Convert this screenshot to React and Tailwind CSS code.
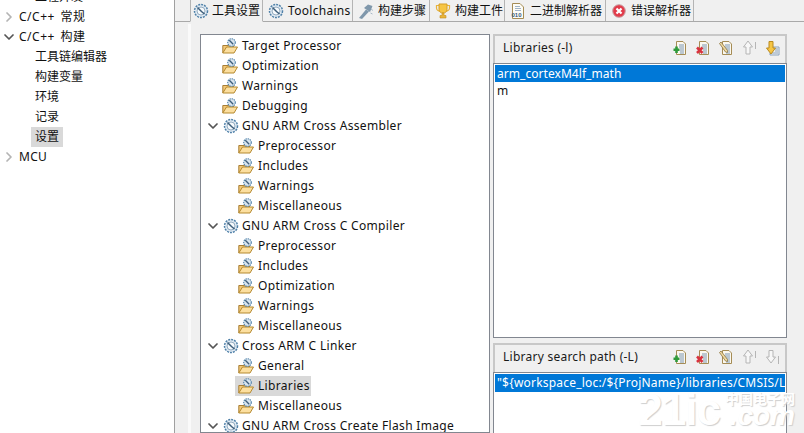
import { ChevronDown, ChevronRight } from "lucide-react";

const font = "font-['Noto_Sans','Noto_Sans_CJK_SC',sans-serif]";

// blue tool gear used by tabs and tree groups
const ToolIcon = () => (
  <svg width="16" height="16" viewBox="0 0 16 16" className="shrink-0">
    <circle cx="8" cy="8" r="6.5" fill="#dfe9f2" stroke="#4f80a8" strokeWidth="1.5" strokeDasharray="2 1" />
    <circle cx="8" cy="8" r="4" fill="#f7fafc" stroke="#7d9ab3" strokeWidth="0.8" />
    <path d="M4.5 4.5L8.5 8.5L11.5 11" stroke="#3c5d7a" strokeWidth="1.5" fill="none" />
  </svg>
);

const FolderIcon = () => (
  <svg width="16" height="16" viewBox="0 0 16 16" className="shrink-0">
    <path d="M0.8 15V7.5H5L11.5 8V10" fill="#f3c878" stroke="#a87f35" />
    <path d="M0.8 15L4.5 9H15.5L12 15Z" fill="#fcdf9f" stroke="#b5892f" />
    <circle cx="9.5" cy="4.5" r="3.8" fill="#d9e5ef" stroke="#4f80a8" strokeWidth="1.1" strokeDasharray="1.4 0.8" />
    <path d="M7.3 2.3L11.2 6.2" stroke="#3c5d7a" strokeWidth="1.3" />
  </svg>
);

const Doc = () => (
  <>
    <path d="M4.5 1.5H11L13.5 4V14.5H4.5Z" fill="#fbf8ef" stroke="#a58c55" />
    <path d="M7 5H12M7 7H12M8 9H12M8 11H12M8 13H12" stroke="#7d97b3" strokeWidth="1" />
  </>
);

const AddIcon = () => (
  <svg width="16" height="16" viewBox="0 0 16 16">
    <Doc />
    <path d="M4.5 6.5V13M1.5 9.8H7.5" stroke="#2f9a3a" strokeWidth="2.6" />
  </svg>
);

const RemoveIcon = () => (
  <svg width="16" height="16" viewBox="0 0 16 16">
    <Doc />
    <path d="M2 7.5L7.5 13M7.5 7.5L2 13" stroke="#d9333f" strokeWidth="2.6" />
  </svg>
);

const EditIcon = () => (
  <svg width="16" height="16" viewBox="0 0 16 16">
    <Doc />
    <path d="M1.5 3.5L3 2L9.5 10.5L9.5 12.5L7.5 12Z" fill="#f0d9a0" stroke="#8a7440" strokeWidth="0.8" />
  </svg>
);

const UpIcon = () => (
  <svg width="16" height="16" viewBox="0 0 16 16">
    <path d="M7 1L11.5 7H9V14H5V7H2.5Z" fill="#f7f7f7" stroke="#b5b5b5" />
    <path d="M14.5 2V9" stroke="#b5b5b5" />
  </svg>
);

const DownIcon = ({ active }) => (
  <svg width="16" height="16" viewBox="0 0 16 16">
    {active && <path d="M9 7H15V15H6V13M11 9H14M11 11H14M8 13H14" fill="none" stroke="#8aa3bd" />}
    <path
      d="M7 14L2.5 8H5V1.5H9V8H11.5Z"
      fill={active ? "#f6c544" : "#f7f7f7"}
      stroke={active ? "#b98a1f" : "#b5b5b5"}
    />
    {!active && <path d="M14.5 7V15" stroke="#b5b5b5" />}
  </svg>
);

const StepIcon = () => (
  <svg width="16" height="16" viewBox="0 0 16 16" className="shrink-0">
    <path d="M1 15L8 6.5L11 8.5L4 16Z" fill="#7f97ab" />
    <path d="M6 5L10 1.5L14.5 3L12 9Z" fill="#7f97ab" />
    <path d="M13 6L15 7.5M12.5 10L14.5 11" stroke="#a9bac8" />
  </svg>
);

const TrophyIcon = () => (
  <svg width="16" height="16" viewBox="0 0 16 16" className="shrink-0">
    <path d="M1.5 2.5H14.5V5C14.5 7 12.5 8 11 8H5C3.5 8 1.5 7 1.5 5Z" fill="none" stroke="#e7b33c" strokeWidth="1.2" />
    <path d="M4 1H12V6.5C12 9 10 10 8 10C6 10 4 9 4 6.5Z" fill="#f6c544" stroke="#d69e26" />
    <path d="M7 10H9V12.5H11V15H5V12.5H7Z" fill="#eab63a" stroke="#c48f20" strokeWidth="0.6" />
  </svg>
);

const BinaryIcon = () => (
  <svg width="16" height="16" viewBox="0 0 16 16" className="shrink-0">
    <path d="M2.5 0.5H10L13.5 4V15.5H2.5Z" fill="#fdfcf5" stroke="#a58c55" />
    <path d="M5 3.5H10M5 5.5H11M5 7.5H11" stroke="#9fb3c8" />
    <text x="1.5" y="14" fontSize="6" fontWeight="700" fill="#37597c" fontFamily="Liberation Sans">010</text>
  </svg>
);

const ErrorIcon = () => (
  <svg width="16" height="16" viewBox="0 0 16 16" className="shrink-0">
    <circle cx="8" cy="8" r="6.3" fill="#e23b4a" stroke="#c7a0a4" />
    <path d="M5.5 5.5L10.5 10.5M10.5 5.5L5.5 10.5" stroke="#fff" strokeWidth="2.2" />
  </svg>
);

const navRows = [
  { label: "工程开发", indent: 1 },
  { label: "C/C++ 常规", arrow: "right", wide: true },
  { label: "C/C++ 构建", arrow: "down", wide: true },
  { label: "工具链编辑器", indent: 1 },
  { label: "构建变量", indent: 1 },
  { label: "环境", indent: 1 },
  { label: "记录", indent: 1 },
  { label: "设置", indent: 1, selected: true },
  { label: "MCU", arrow: "right" },
];

const tabs = [
  { label: "工具设置", icon: <ToolIcon />, width: "w-[73px]", active: true },
  { label: "Toolchains", icon: <ToolIcon />, width: "w-[90px]", latin: true },
  { label: "构建步骤", icon: <StepIcon />, width: "w-[77px]" },
  { label: "构建工件", icon: <TrophyIcon />, width: "w-[75px]" },
  { label: "二进制解析器", icon: <BinaryIcon />, width: "w-[101px]" },
  { label: "错误解析器", icon: <ErrorIcon />, width: "w-[88px]" },
];

const treeRows = [
  ["Target Processor", 1],
  ["Optimization", 1],
  ["Warnings", 1],
  ["Debugging", 1],
  ["GNU ARM Cross Assembler", 0],
  ["Preprocessor", 2],
  ["Includes", 2],
  ["Warnings", 2],
  ["Miscellaneous", 2],
  ["GNU ARM Cross C Compiler", 0],
  ["Preprocessor", 2],
  ["Includes", 2],
  ["Optimization", 2],
  ["Warnings", 2],
  ["Miscellaneous", 2],
  ["Cross ARM C Linker", 0],
  ["General", 2],
  ["Libraries", 2, true],
  ["Miscellaneous", 2],
  ["GNU ARM Cross Create Flash Image", 0],
];

const Toolbar = ({ downActive }) => (
  <div className="flex items-center gap-[7px]">
    <AddIcon />
    <RemoveIcon />
    <EditIcon />
    <UpIcon />
    <DownIcon active={downActive} />
  </div>
);

const ListPanel = ({ title, downActive, className, children }) => (
  <section className={`flex flex-col ${className}`}>
    <header className="h-[29px] shrink-0 flex items-center justify-between pl-[8px] pr-[5px] pb-[4px] border-2 border-[#c8c8c8] border-b-0 text-[#1a1a1a]">
      <span className="tracking-[0.25px]">{title}</span>
      <Toolbar downActive={downActive} />
    </header>
    <div className="flex-1 bg-white border border-[#828790] p-[1px] overflow-hidden">{children}</div>
  </section>
);

export default function App() {
  return (
    <div className={`${font} flex w-[804px] h-[433px] overflow-hidden bg-[#f0f0f0] text-[12px] text-[#111]`}>
      {/* left nav */}
      <aside className="w-[175px] shrink-0 bg-white border-r border-[#a0a0a0] -mt-[13px]">
        {navRows.map((row) => (
          <div key={row.label} className="h-[20px] flex items-center">
            {row.arrow === "right" && <ChevronRight size={16} strokeWidth={2.6} className="ml-[1px] mr-[2px] text-[#b4b4b4]" />}
            {row.arrow === "down" && <ChevronDown size={16} strokeWidth={2.6} className="ml-[1px] mr-[2px] text-[#555]" />}
            {row.indent && (
              <span className={`ml-[31px] px-[4px] h-[20px] leading-[20px] ${row.selected ? "bg-[#d9d9d9]" : ""}`}>
                {row.label}
              </span>
            )}
            {row.arrow && (
              <span className={row.wide ? "tracking-[0.5px] [word-spacing:2px]" : "tracking-[0.3px]"}>{row.label}</span>
            )}
          </div>
        ))}
      </aside>

      {/* main area */}
      <main className="flex-1 flex flex-col min-w-0">
        <nav className="h-[22px] shrink-0 flex pl-[15px] border-b border-[#a9a9a9]">
          {tabs.map((tab) => (
            <div
              key={tab.label}
              className={`${tab.width} shrink-0 flex items-center pt-[1px] whitespace-nowrap border-r border-[#b4b4b4] ${
                tab.active
                  ? "h-[22px] gap-[3px] pl-[2px] border-l bg-[#f0f0f0] border-b border-b-[#f0f0f0]"
                  : "h-[21px] gap-[4px] pl-[5px]"
              }`}
            >
              {tab.icon}
              <span className={tab.latin ? "tracking-[0.3px]" : ""}>{tab.label}</span>
            </div>
          ))}
        </nav>

        <div className="flex-1 min-h-0 flex pt-[2px]">
          <div className="w-[3px] ml-[13px] bg-[#fafafa] shrink-0" />
          <div className="flex-1 min-w-0 flex gap-[3px] pt-[10px] pl-[9px] pr-[17px]">
            {/* tool settings tree */}
            <div className="w-[290px] shrink-0 bg-white border border-[#828790] pt-[1px] overflow-hidden tracking-[0.33px]">
              {treeRows.map(([label, level, selected], i) => (
                <div key={i} className="h-[20px] flex items-center">
                  {level === 0 && (
                    <>
                      <ChevronDown size={16} strokeWidth={2.6} className="ml-[4px] mr-[2px] text-[#555] shrink-0" />
                      <ToolIcon />
                      <span className="ml-[3px] whitespace-nowrap">{label}</span>
                    </>
                  )}
                  {level === 1 && (
                    <div className="ml-[21px] flex items-center gap-[4px]">
                      <FolderIcon />
                      <span>{label}</span>
                    </div>
                  )}
                  {level === 2 && (
                    <div className={`ml-[34px] h-[20px] pl-[3px] pr-[1px] flex items-center gap-[4px] ${selected ? "bg-[#d9d9d9]" : ""}`}>
                      <FolderIcon />
                      <span>{label}</span>
                    </div>
                  )}
                </div>
              ))}
            </div>

            {/* libraries and search paths */}
            <div className="flex-1 min-w-0 flex flex-col gap-[5px]">
              <ListPanel title="Libraries (-l)" downActive className="h-[304px] shrink-0">
                <div className="h-[17px] leading-[17px] bg-[#0078d7] text-white pl-[2px] tracking-[0.05px]">arm_cortexM4lf_math</div>
                <div className="h-[17px] leading-[17px] pl-[2px]">m</div>
              </ListPanel>
              <ListPanel title="Library search path (-L)" className="flex-1 min-h-0 relative -mb-[2px]">
                <div className="h-[18px] leading-[18px] bg-[#0078d7] text-white pl-[2px] whitespace-nowrap overflow-hidden tracking-[0.2px]">
                  {'"${workspace_loc:/${ProjName}/libraries/CMSIS/L'}
                </div>
                {/* faint watermark over the bottom corner */}
                <div className="absolute right-[-8px] bottom-[8px] flex items-end gap-[5px] font-bold text-white font-['Liberation_Sans','Noto_Sans_CJK_SC',sans-serif] [text-shadow:1px_1px_1px_#cfcfcf]">
                  <span className="text-[44px] leading-[34px] tracking-[-1px]">21ic</span>
                  <div className="flex flex-col items-end">
                    <span className="text-[14px] leading-[12px]">中国电子网</span>
                    <span className="text-[28px] leading-[22px] italic">.com</span>
                  </div>
                </div>
              </ListPanel>
            </div>
          </div>
        </div>
      </main>
    </div>
  );
}
